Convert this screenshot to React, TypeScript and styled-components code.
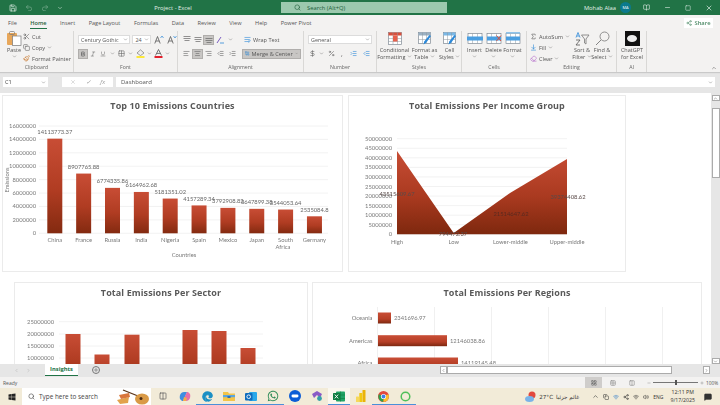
import React from 'react';
import styled, { createGlobalStyle } from 'styled-components';
import {
    Scissors, Copy, Paintbrush, Search, Undo2, Redo2, Save, Minus, X, Square, ChevronDown, ChevronUp,
    ChevronLeft, ChevronRight, Plus, Bold, Italic, Underline, AlignLeft, AlignCenter, AlignRight, Share2,
    Percent, DollarSign, Sigma, ArrowDownToLine, Eraser, IndentIncrease, IndentDecrease, WrapText, Combine,
    Grid2x2, BookOpen, Volume2, Wifi, MessageSquare, LayoutGrid, Columns2,
} from 'lucide-react';
import { FaWindows, FaWhatsapp, FaEdge } from 'react-icons/fa';

const Global = createGlobalStyle`
    html, body { margin: 0; padding: 0; background: #fff; overflow: hidden; }
    * { box-sizing: border-box; }
`;

const Page = styled.div`
    width: 720px;
    height: 405px;
    display: flex;
    flex-direction: column;
    overflow: hidden;
    font-family: 'Open Sans', 'Liberation Sans', sans-serif;
    font-size: 6px;
    color: #444;
    filter: blur(0.3px);
`;

const TitleBar = styled.div`
    height: 15px;
    flex: none;
    background: #217346;
    color: #e3f0e8;
    display: flex;
    align-items: center;
    padding: 0 7px 0 9px;
`;

const QuickAccess = styled.div`
    width: 100px;
    display: flex;
    align-items: center;
    gap: 8px;
`;

const DocTitle = styled.div`
    width: 128px;
    text-align: center;
    font-size: 5.8px;
    margin-right: 44px;
`;

const SearchBox = styled.div`
    width: 166px;
    height: 11px;
    background: #9cc9ae;
    color: #1d5c39;
    display: flex;
    align-items: center;
    gap: 6px;
    padding-left: 13px;
    font-size: 5.8px;
`;

const Account = styled.div`
    margin-left: auto;
    display: flex;
    align-items: center;
    gap: 4px;
    font-size: 5.8px;
`;

const Avatar = styled.div`
    width: 11px;
    height: 11px;
    border-radius: 50%;
    background: #0b7a8e;
    color: #fff;
    font-size: 4px;
    display: flex;
    align-items: center;
    justify-content: center;
`;

const WindowControls = styled.div`
    display: flex;
    align-items: center;
    gap: 14px;
    margin-left: 12px;
`;

const TabRow = styled.div`
    height: 15px;
    flex: none;
    background: #f3f2f1;
    display: flex;
    align-items: center;
    padding-left: 8px;
    gap: 13.5px;
`;

const Tab = styled.div<{ $active?: boolean }>`
    font-size: 5.6px;
    height: 12px;
    line-height: 12px;
    color: ${(props) => (props.$active ? '#1f5e3a' : '#555')};
    font-weight: ${(props) => (props.$active ? 600 : 400)};
    border-bottom: ${(props) => (props.$active ? '1px solid #217346' : 'none')};
`;

const ShareButton = styled.div`
    margin-left: auto;
    margin-right: 7px;
    width: 29px;
    height: 10px;
    background: #fff;
    color: #4d8a66;
    display: flex;
    align-items: center;
    justify-content: center;
    gap: 2px;
    font-size: 5.8px;
    font-weight: 600;
`;

const Ribbon = styled.div`
    height: 42px;
    flex: none;
    background: #f3f2f1;
    display: flex;
    position: relative;
    box-shadow: 0 1px 1px #c9c9c9;
    z-index: 1;
`;

const Group = styled.div<{ $w: number }>`
    width: ${(props) => props.$w}px;
    flex: none;
    display: flex;
    flex-direction: column;
    margin-top: 1px;
    border-right: 1px solid #d9d8d6;
`;

const GroupBody = styled.div<{ $pad?: number; $col?: boolean }>`
    flex: 1;
    display: flex;
    flex-direction: ${(props) => (props.$col ? 'column' : 'row')};
    padding-left: ${(props) => props.$pad ?? 3}px;
    min-height: 0;
`;

const GroupLabel = styled.div`
    height: 8px;
    line-height: 7px;
    text-align: center;
    font-size: 5.2px;
    color: #666;
`;

const Row = styled.div<{ $gap?: number; $h?: number }>`
    display: flex;
    align-items: center;
    gap: ${(props) => props.$gap ?? 0}px;
    height: ${(props) => props.$h ?? 14}px;
`;

const Stack = styled.div<{ $w?: number }>`
    display: flex;
    flex-direction: column;
    width: ${(props) => (props.$w ? `${props.$w}px` : 'auto')};
`;

const SmallAction = styled.div`
    height: 11px;
    display: flex;
    align-items: center;
    gap: 2px;
    font-size: 5.6px;
    color: #555;
    white-space: nowrap;
`;

const WrapAction = styled(SmallAction)`
    margin-left: 10px;
`;

const LargeAction = styled.div<{ $w: number }>`
    width: ${(props) => props.$w}px;
    flex: none;
    display: flex;
    flex-direction: column;
    align-items: center;
    font-size: 5.5px;
    line-height: 7.2px;
    text-align: center;
    color: #555;
    white-space: nowrap;
`;

const LargeIcon = styled.div`
    height: 15px;
    display: flex;
    align-items: center;
    justify-content: center;
    margin-bottom: 1px;
`;

const SelectBox = styled.div<{ $w: number }>`
    width: ${(props) => props.$w}px;
    height: 9px;
    background: #fff;
    border: 1px solid #dcdcdc;
    display: flex;
    align-items: center;
    justify-content: space-between;
    padding: 0 1px 0 2px;
    font-size: 5.4px;
    color: #555;
    white-space: nowrap;
`;

const IconCell = styled.div<{ $active?: boolean; $w?: number }>`
    width: ${(props) => props.$w ?? 11}px;
    height: 10px;
    flex: none;
    display: flex;
    align-items: center;
    justify-content: center;
    color: #666;
    font-size: 7px;
    background: ${(props) => (props.$active ? '#c8c6c4' : 'transparent')};
    border: ${(props) => (props.$active ? '1px solid #b0aeac' : 'none')};
`;

const MergeButton = styled.div`
    width: 59px;
    height: 10px;
    margin-left: 4px;
    display: flex;
    align-items: center;
    gap: 2px;
    padding: 0 2px;
    background: #c8c6c4;
    border: 1px solid #b0aeac;
    font-size: 5.6px;
    color: #555;
    white-space: nowrap;
`;

const GptTile = styled.div`
    width: 15px;
    height: 15px;
    background: #111;
    display: flex;
    align-items: center;
    justify-content: center;
`;

const GptMark = styled.div`
    width: 10px;
    height: 7px;
    border-radius: 50%;
    background: #eee;
`;

const CollapseArrow = styled.div`
    position: absolute;
    right: 3px;
    bottom: 1px;
    color: #555;
    display: flex;
`;

const FormulaStrip = styled.div`
    height: 21px;
    flex: none;
    background: #e6e6e6;
    display: flex;
    align-items: center;
    padding: 5px 0 6px 3px;
`;

const NameBox = styled.div`
    width: 45px;
    height: 10px;
    background: #fff;
    display: flex;
    align-items: center;
    justify-content: space-between;
    padding: 0 2px;
    font-size: 5.6px;
`;

const FxBox = styled.div`
    width: 51px;
    height: 10px;
    margin-left: 14px;
    background: #fff;
    display: flex;
    align-items: center;
    justify-content: space-around;
    padding: 0 3px;
    color: #999;
    font-size: 6px;
    font-style: italic;
`;

const FormulaInput = styled.div`
    flex: 1;
    height: 10px;
    margin: 0 5px 0 3px;
    background: #fff;
    display: flex;
    align-items: center;
    justify-content: space-between;
    padding: 0 2px 0 5px;
    font-size: 6px;
    color: #555;
`;

const SheetArea = styled.div`
    flex: 1;
    min-height: 0;
    display: flex;
    background: #fff;
`;

const Canvas = styled.div`
    flex: 1;
    min-width: 0;
    overflow: hidden;
    padding-top: 2px;
`;

const ChartRow = styled.div<{ $left: number; $gap: number; $top: number }>`
    display: flex;
    padding-left: ${(props) => props.$left}px;
    gap: ${(props) => props.$gap}px;
    margin-top: ${(props) => props.$top}px;
`;

const Card = styled.div<{ $w: number }>`
    width: ${(props) => props.$w}px;
    height: 177px;
    flex: none;
    background: #fff;
    border: 1px solid #ebebeb;
`;

const CardTitle = styled.div`
    height: 20px;
    line-height: 20px;
    text-align: center;
    font-size: 9px;
    font-weight: 700;
    letter-spacing: 0.1px;
    color: #595959;
`;

const Plot = styled.svg`
    display: block;
    font-family: 'Lato', 'Liberation Sans', sans-serif;
    font-size: 5.8px;
`;

const VScroll = styled.div`
    width: 9px;
    flex: none;
    background: #e6e6e6;
    display: flex;
    flex-direction: column;
    align-items: center;
    padding: 2px 0 0;
`;

const ScrollButton = styled.div`
    width: 8px;
    height: 6px;
    background: #fff;
    border: 1px solid #ababab;
    display: flex;
    align-items: center;
    justify-content: center;
    color: #555;
    flex: none;
`;

const ScrollDown = styled(ScrollButton)`
    margin-top: auto;
`;

const VThumb = styled.div`
    width: 8px;
    height: 70px;
    margin-top: 7px;
    background: #fff;
    border: 1px solid #ababab;
`;

const SheetTabs = styled.div`
    height: 13px;
    flex: none;
    background: #e6e6e6;
    display: flex;
    align-items: flex-start;
    color: #aaa;
`;

const TabNav = styled.div`
    width: 45px;
    height: 12px;
    display: flex;
    align-items: center;
    justify-content: flex-end;
    gap: 7px;
    padding-right: 14px;
`;

const SheetTab = styled.div`
    width: 33px;
    height: 12px;
    background: #fff;
    border-bottom: 1px solid #217346;
    color: #217346;
    font-size: 5.8px;
    font-weight: 700;
    text-align: center;
    line-height: 11px;
`;

const AddSheet = styled.div`
    width: 8px;
    height: 8px;
    margin: 2px 0 0 14px;
    border: 1px solid #777;
    border-radius: 50%;
    color: #555;
    display: flex;
    align-items: center;
    justify-content: center;
`;

const HScroll = styled.div`
    margin: 2px 0 0 340px;
    width: 270px;
    height: 8px;
    display: flex;
    align-items: stretch;
`;

const HThumb = styled.div`
    width: 225px;
    background: #fff;
    border: 1px solid #ababab;
`;

const HButton = styled(ScrollButton)`
    width: 7px;
    height: 8px;
`;

const HButtonEnd = styled(HButton)`
    margin-left: auto;
`;

const StatusBar = styled.div`
    height: 11px;
    flex: none;
    background: #f3f2f1;
    display: flex;
    align-items: center;
    padding-left: 3px;
    font-size: 5px;
    color: #555;
`;

const ViewButtons = styled.div`
    margin-left: auto;
    display: flex;
    align-items: center;
    height: 100%;
`;

const ViewButton = styled.div<{ $active?: boolean }>`
    width: 17px;
    height: 100%;
    margin-right: 2px;
    display: flex;
    align-items: center;
    justify-content: center;
    background: ${(props) => (props.$active ? '#cfcdcb' : 'transparent')};
`;

const ZoomSlider = styled.div`
    width: 45px;
    height: 1px;
    background: #777;
    margin: 0 2px;
    display: flex;
    align-items: center;
    justify-content: center;
`;

const ZoomThumb = styled.div`
    width: 2px;
    height: 5px;
    background: #555;
`;

const ZoomControl = styled.div`
    display: flex;
    align-items: center;
    margin: 0 2px 0 5px;
    color: #666;
`;

const Percentage = styled.div`
    width: 14px;
    font-size: 4.8px;
`;

const Taskbar = styled.div`
    height: 17px;
    flex: none;
    background: #f2ebd8;
    display: flex;
    align-items: stretch;
    color: #333;
`;

const StartButton = styled.div`
    width: 22px;
    display: flex;
    align-items: center;
    justify-content: center;
    padding-left: 1px;
    color: #222;
`;

const TaskSearch = styled.div`
    width: 129px;
    background: #fff;
    display: flex;
    align-items: center;
    padding-left: 6px;
    gap: 4px;
    font-size: 6.4px;
    color: #444;
`;

const SearchDoodle = styled.svg`
    margin-left: auto;
`;

const TaskIcons = styled.div`
    display: flex;
    padding-left: 1px;
`;

const TaskIcon = styled.div<{ $open?: boolean; $focus?: boolean }>`
    width: 22px;
    display: flex;
    align-items: center;
    justify-content: center;
    background: ${(props) => (props.$focus ? '#faf7ee' : 'transparent')};
    border-bottom: 1px solid ${(props) => (props.$open ? '#4a90d9' : 'transparent')};
`;

const Tray = styled.div`
    margin-left: auto;
    display: flex;
    align-items: center;
    padding-right: 8px;
    gap: 4px;
    font-size: 5px;
`;

const Weather = styled.div`
    display: flex;
    align-items: center;
    gap: 3px;
    margin-right: 9px;
    font-size: 5.6px;
    font-family: 'DejaVu Sans', 'Noto Sans', sans-serif;
`;

const Clock = styled.div`
    margin: 0 5px 0 3px;
    text-align: center;
    font-size: 5.2px;
    line-height: 7.5px;
`;

const bars = [
    { name: 'China', value: 14113773.37, label: '14113773.37' },
    { name: 'France', value: 8907765.88, label: '8907765.88' },
    { name: 'Russia', value: 6774335.86, label: '6774335.86' },
    { name: 'India', value: 6164962.68, label: '6164962.68' },
    { name: 'Nigeria', value: 5181351.02, label: '5181351.02' },
    { name: 'Spain', value: 4157289.34, label: '4157289.34' },
    { name: 'Mexico', value: 3792908.82, label: '3792908.82' },
    { name: 'Japan', value: 3647899.38, label: '3647899.38' },
    { name: 'South', value: 3544053.64, label: '3544053.64' },
    { name: 'Germany', value: 2535084.8, label: '2535084.8' },
];

const sectorBars = [
    { x: 73, top: 334 },
    { x: 102, top: 354.5 },
    { x: 132, top: 334.7 },
    { x: 190, top: 330 },
    { x: 219, top: 331 },
    { x: 248, top: 348 },
];

const regionBars = [
    { name: 'Oceania', y: 318, end: 391, label: '2341696.97' },
    { name: 'Americas', y: 340.7, end: 447, label: '12146038.86' },
    { name: 'Africa', y: 363, end: 458, label: '14119145.48' },
];

const TEXT = '#7a7a7a';
const GRID = '#efefef';

function Gradients() {
    return (
        <defs>
            <linearGradient id="barFill" x1="0" y1="0" x2="0" y2="1">
                <stop offset="0" stopColor="#c84d35" />
                <stop offset="0.55" stopColor="#b03c22" />
                <stop offset="1" stopColor="#832a10" />
            </linearGradient>
            <linearGradient id="hBarFill" x1="0" y1="0" x2="0" y2="1">
                <stop offset="0" stopColor="#c94e36" />
                <stop offset="0.6" stopColor="#b63f26" />
                <stop offset="1" stopColor="#7c2810" />
            </linearGradient>
        </defs>
    );
}

function CountriesPlot() {
    const zero = 233.3;
    const step = (233.3 - 126) / 16000000;
    const ticks = [0, 2, 4, 6, 8, 10, 12, 14, 16];
    return (
        <Plot width={339} height={155} viewBox="3 116 339 155">
            <Gradients />
            {ticks.map((t) => (
                <g key={t}>
                    <line x1="39" x2="328" y1={zero - t * 1000000 * step} y2={zero - t * 1000000 * step} stroke={GRID} strokeWidth="0.8" />
                    <text x="36" y={zero + 2 - t * 1000000 * step} textAnchor="end" fill={TEXT}>
                        {t === 0 ? '0' : `${t * 1000000}`}
                    </text>
                </g>
            ))}
            {bars.map((b, i) => {
                const cx = 54.8 + i * 28.85;
                const top = zero - b.value * step;
                return (
                    <g key={b.name}>
                        <rect x={cx - 7.5} y={top} width="15" height={zero - top} fill="url(#barFill)" />
                        <text x={cx} y={top - 4.5} textAnchor="middle" fill="#666">{b.label}</text>
                        <text x={cx} y="242" textAnchor="middle" fill={TEXT}>{b.name}</text>
                    </g>
                );
            })}
            <text x="283" y="249" textAnchor="middle" fill={TEXT}>Africa</text>
            <text x="184" y="257" textAnchor="middle" fill={TEXT}>Countries</text>
            <text transform="translate(8.5 180) rotate(-90)" textAnchor="middle" fill={TEXT}>Emissions</text>
        </Plot>
    );
}

function IncomePlot() {
    const zero = 234.3;
    const step = (234.3 - 138.7) / 50;
    const ticks = [0, 5, 10, 15, 20, 25, 30, 35, 40, 45, 50];
    return (
        <Plot width={276} height={155} viewBox="348 116 276 155">
            <defs>
                <linearGradient id="areaFill" gradientUnits="userSpaceOnUse" x1="0" y1="150" x2="0" y2="234">
                    <stop offset="0" stopColor="#c84d35" />
                    <stop offset="0.55" stopColor="#aa3a20" />
                    <stop offset="1" stopColor="#7e280e" />
                </linearGradient>
            </defs>
            {ticks.map((t) => (
                <g key={t}>
                    <line x1="396" x2="566" y1={zero - t * step} y2={zero - t * step} stroke={GRID} strokeWidth="0.8" />
                    <text x="391" y={zero + 2 - t * step} textAnchor="end" fill={TEXT}>{t === 0 ? '0' : `${t * 1000000}`}</text>
                </g>
            ))}
            <polygon points="396,151 452.7,233 509,193 566,159 566,234.3 396,234.3" fill="url(#areaFill)" />
            <text x="396" y="195.5" textAnchor="middle" fill="#5a4a48">43515609.67</text>
            <text x="452" y="236" textAnchor="middle" fill="#5a4a48">794472.37</text>
            <text x="510" y="216" textAnchor="middle" fill="#5a2a20">21514647.62</text>
            <text x="567" y="199" textAnchor="middle" fill="#5a4a48">39374408.62</text>
            <text x="396" y="244" textAnchor="middle" fill={TEXT}>High</text>
            <text x="452.7" y="244" textAnchor="middle" fill={TEXT}>Low</text>
            <text x="509.5" y="244" textAnchor="middle" fill={TEXT}>Lower-middle</text>
            <text x="566" y="244" textAnchor="middle" fill={TEXT}>Upper-middle</text>
        </Plot>
    );
}

function SectorPlot() {
    const ticks = [
        { y: 321.7, label: '25000000' },
        { y: 334, label: '20000000' },
        { y: 346, label: '15000000' },
        { y: 358, label: '10000000' },
    ];
    return (
        <Plot width={292} height={155} viewBox="15 303 292 155">
            <Gradients />
            {ticks.map((t) => (
                <g key={t.label}>
                    <line x1="59" x2="263" y1={t.y} y2={t.y} stroke={GRID} strokeWidth="0.8" />
                    <text x="54" y={t.y + 2} textAnchor="end" fill={TEXT}>{t.label}</text>
                </g>
            ))}
            {sectorBars.map((b) => (
                <rect key={b.x} x={b.x - 7.5} y={b.top} width="15" height={384 - b.top} fill="url(#barFill)" />
            ))}
        </Plot>
    );
}

function RegionsPlot() {
    return (
        <Plot width={388} height={155} viewBox="313 303 388 155">
            <Gradients />
            {[377.5, 434.5, 491.5, 548.5, 605.5, 662.5].map((x) => (
                <line key={x} x1={x} x2={x} y1="307" y2="400" stroke="#ececec" strokeWidth="0.8" />
            ))}
            {regionBars.map((b) => (
                <g key={b.name}>
                    <rect x="378" y={b.y - 5.5} width={b.end - 378} height="11" fill="url(#hBarFill)" />
                    <text x="372.5" y={b.y + 2} textAnchor="end" fill={TEXT}>{b.name}</text>
                    <text x={b.end + 3} y={b.y + 2} fill={TEXT}>{b.label}</text>
                </g>
            ))}
        </Plot>
    );
}

function TableIcon({ accent, overlay }: { accent: string; overlay?: string }) {
    return (
        <svg width="14" height="13" viewBox="0 0 14 13">
            <rect x="0.5" y="0.5" width="13" height="12" fill="#fff" stroke="#7f8a94" strokeWidth="0.7" />
            <rect x="0.5" y="0.5" width="13" height="3" fill={accent} />
            <path d="M5 0.5V12.5M9.5 0.5V12.5M0.5 6.5H13.5M0.5 9.5H13.5" stroke="#8d969e" strokeWidth="0.5" />
            {overlay && <rect x="5" y="3.5" width="4.5" height="6" fill={overlay} />}
        </svg>
    );
}

function BrushTable({ fill }: { fill: string }) {
    return (
        <svg width="14" height="13" viewBox="0 0 14 13">
            <rect x="0.5" y="0.5" width="12" height="11" fill="#fff" stroke="#7f8a94" strokeWidth="0.7" />
            <rect x="0.5" y="0.5" width="12" height="3" fill={fill} />
            <path d="M4.5 0.5V11.5M8.5 0.5V11.5M0.5 7.5H12.5" stroke="#8d969e" strokeWidth="0.5" />
            <path d="M13 4 8 11 5.5 12.5 6.2 9.6 11.4 3Z" fill="#2b88d8" />
        </svg>
    );
}

function CellsIcon({ mark }: { mark: 'insert' | 'delete' | 'format' }) {
    return (
        <svg width="16" height="13" viewBox="0 0 16 13">
            <rect x="1" y="1.5" width="14" height="10" fill="#fff" stroke="#7f8a94" strokeWidth="0.7" />
            <path d="M5.5 1.5V11.5M10.5 1.5V11.5" stroke="#8d969e" strokeWidth="0.5" />
            <rect x={mark === 'insert' ? 0 : 1} y="4.5" width={mark === 'insert' ? 16 : 14} height="4" fill="#4a9ee0" />
            {mark === 'delete' && <path d="M10.5 3.5 15 9M15 3.5 10.5 9" stroke="#d8503c" strokeWidth="1" />}
            {mark === 'format' && <rect x="1" y="0" width="14" height="1.6" fill="#8fc3ea" />}
        </svg>
    );
}

function SortIcon() {
    return (
        <svg width="15" height="14" viewBox="0 0 15 14">
            <path d="M1 5.5 3 0.5 5 5.5M1.8 4H4.2" fill="none" stroke="#2b88d8" strokeWidth="0.8" />
            <path d="M1 8H5L1 13H5" fill="none" stroke="#555" strokeWidth="0.8" />
            <path d="M6.5 3H14L11 7V12L9.5 11V7Z" fill="none" stroke="#777" strokeWidth="0.8" />
        </svg>
    );
}

function FindIcon() {
    return (
        <svg width="15" height="15" viewBox="0 0 15 15">
            <circle cx="9.5" cy="5.5" r="4.5" fill="none" stroke="#777" strokeWidth="0.8" />
            <path d="M6 9 1 14" stroke="#777" strokeWidth="0.9" />
        </svg>
    );
}

function PasteIcon() {
    return (
        <svg width="16" height="15" viewBox="0 0 16 15">
            <rect x="1" y="2" width="10" height="12" rx="1" fill="#e8a75a" />
            <rect x="3.5" y="0.5" width="5" height="3" rx="1" fill="none" stroke="#777" strokeWidth="0.7" />
            <rect x="6.5" y="5" width="8.5" height="9.5" fill="#fff" stroke="#777" strokeWidth="0.7" />
        </svg>
    );
}

function ValignIcon({ offset }: { offset: number }) {
    return (
        <svg width="8" height="7" viewBox="0 0 8 7">
            <path d={`M0.5 ${offset + 0.5}H7.5M0.5 ${offset + 2.5}H7.5M1.5 ${offset + 4.5}H6.5`} stroke="#666" strokeWidth="0.7" />
        </svg>
    );
}

function OrientationIcon() {
    return (
        <svg width="9" height="8" viewBox="0 0 9 8">
            <path d="M1 7 5 1" stroke="#7a5cc0" strokeWidth="1" />
            <path d="M4 7H8" stroke="#2b88d8" strokeWidth="0.8" />
        </svg>
    );
}

function FillIcon({ bar, letter }: { bar: string; letter?: boolean }) {
    return (
        <svg width="9" height="9" viewBox="0 0 9 9">
            {letter ? (
                <path d="M1.5 6.5 4.5 0.5 7.5 6.5M2.8 4.4H6.2" fill="none" stroke="#555" strokeWidth="0.8" />
            ) : (
                <path d="M4.5 0.8 8 4 4.5 6.6 1 4Z" fill="#eee" stroke="#666" strokeWidth="0.6" />
            )}
            <rect x="0.5" y="7" width="8" height="2" fill={bar} />
        </svg>
    );
}

function GrowFont({ up }: { up: boolean }) {
    return (
        <svg width="10" height="9" viewBox="0 0 10 9">
            <path d="M0.8 8.5 3.5 1.5 6.2 8.5M1.8 6H5.2" fill="none" stroke="#555" strokeWidth="0.8" />
            <path d={up ? 'M6.5 3 8 1 9.5 3' : 'M6.5 1 8 3 9.5 1'} fill="none" stroke="#2b88d8" strokeWidth="0.7" />
        </svg>
    );
}

function Caret() {
    return <ChevronDown size={5} strokeWidth={2} color="#666" />;
}

function ExcelIcon() {
    return (
        <svg width="12" height="11" viewBox="0 0 12 11">
            <rect x="3" y="0.5" width="9" height="10" rx="0.8" fill="#21a366" />
            <path d="M7.5 0.5V10.5M3 4H12M3 7.5H12" stroke="#107c41" strokeWidth="0.6" />
            <rect x="0" y="2" width="7" height="7" rx="0.6" fill="#107c41" />
            <path d="M1.8 3.6 5.2 7.4M5.2 3.6 1.8 7.4" stroke="#fff" strokeWidth="0.9" />
        </svg>
    );
}

function ChromeIcon() {
    return (
        <svg width="11" height="11" viewBox="0 0 12 12">
            <circle cx="6" cy="6" r="6" fill="#e2483d" />
            <path d="M6 6 1 3.5 A6 6 0 0 0 6 12Z" fill="#2ba24c" />
            <path d="M6 6 11.3 3.5 A6 6 0 0 1 6 12Z" fill="#fbc02d" />
            <circle cx="6" cy="6" r="2.8" fill="#fff" />
            <circle cx="6" cy="6" r="2.1" fill="#3f7fe8" />
        </svg>
    );
}

function CopilotIcon() {
    return (
        <svg width="12" height="11" viewBox="0 0 12 11">
            <path d="M1 8C0 4 2 1 5 1H8L6 6 4 10H3Z" fill="#3f8fe0" />
            <path d="M11 3C12 7 10 10 7 10H4L6 5 8 1H9Z" fill="#e870a8" />
            <path d="M4 10 7 10 8 7 5 6Z" fill="#f3b04a" />
        </svg>
    );
}

function FolderIcon() {
    return (
        <svg width="12" height="10" viewBox="0 0 12 10">
            <path d="M0 1H5L6 2.5H12V10H0Z" fill="#f4c447" />
            <rect x="0" y="4" width="12" height="2.2" fill="#5aa6e0" />
            <rect x="4.5" y="5" width="3" height="2" fill="#2d6fb5" />
        </svg>
    );
}

function OutlookIcon() {
    return (
        <svg width="12" height="11" viewBox="0 0 12 11">
            <rect x="4" y="1" width="8" height="9" rx="1" fill="#28a8ea" />
            <rect x="0" y="2" width="7.5" height="7.5" rx="1" fill="#0f6cbd" />
            <circle cx="3.7" cy="5.7" r="1.8" fill="none" stroke="#fff" strokeWidth="0.9" />
        </svg>
    );
}

function ZoomIcon() {
    return (
        <svg width="12" height="12" viewBox="0 0 12 12">
            <circle cx="6" cy="6" r="6" fill="#0b5cd6" />
            <rect x="2.5" y="4.5" width="7" height="3" rx="1.4" fill="#fff" />
        </svg>
    );
}

function StudioIcon() {
    return (
        <svg width="12" height="12" viewBox="0 0 12 12">
            <path d="M1 4 6 1 11 4 9 8 6 5 3 8Z" fill="#8a5cc6" />
            <circle cx="8.5" cy="8.5" r="2.4" fill="#35a0a8" />
        </svg>
    );
}

function PowerBiIcon() {
    return (
        <svg width="10" height="12" viewBox="0 0 10 12">
            <rect x="6.5" y="0" width="3" height="12" rx="0.6" fill="#eab308" />
            <rect x="3.3" y="3" width="3" height="9" rx="0.6" fill="#f2c811" />
            <rect x="0" y="6.5" width="3" height="5.5" rx="0.6" fill="#f6d85a" />
        </svg>
    );
}

function Doodle() {
    return (
        <SearchDoodle width="34" height="16" viewBox="0 0 34 16">
            <path d="M0 11 12 8 11 14 3 15Z" fill="#e2a24c" />
            <path d="M2 6 12 4 13 8 4 10Z" fill="#d9763c" />
            <path d="M6 1 21 7" stroke="#5a3418" strokeWidth="1.2" />
            <ellipse cx="25" cy="10" rx="7" ry="5.5" fill="#d99a46" />
            <circle cx="24" cy="9.5" r="1.5" fill="#4a2a12" />
        </SearchDoodle>
    );
}

export default function App() {
    return (
        <Page>
            <Global />
            <TitleBar>
                <QuickAccess>
                    <Save size={8} />
                    <Undo2 size={8} opacity={0.45} />
                    <Redo2 size={8} opacity={0.45} />
                    <ChevronDown size={6} />
                </QuickAccess>
                <DocTitle>Project  -  Excel</DocTitle>
                <SearchBox>
                    <Search size={7} />
                    Search (Alt+Q)
                </SearchBox>
                <Account>
                    Mohab Alaa
                    <Avatar>MA</Avatar>
                </Account>
                <WindowControls>
                    <BookOpen size={7} />
                    <Minus size={7} />
                    <Square size={6} />
                    <X size={8} />
                </WindowControls>
            </TitleBar>

            <TabRow>
                <Tab>File</Tab>
                <Tab $active>Home</Tab>
                <Tab>Insert</Tab>
                <Tab>Page Layout</Tab>
                <Tab>Formulas</Tab>
                <Tab>Data</Tab>
                <Tab>Review</Tab>
                <Tab>View</Tab>
                <Tab>Help</Tab>
                <Tab>Power Pivot</Tab>
                <ShareButton>
                    <Share2 size={6} />
                    Share
                </ShareButton>
            </TabRow>

            <Ribbon>
                <Group $w={74}>
                    <GroupBody $pad={5}>
                        <LargeAction $w={18}>
                            <LargeIcon><PasteIcon /></LargeIcon>
                            Paste
                            <Caret />
                        </LargeAction>
                        <Stack>
                            <SmallAction><Scissors size={7} color="#666" /> Cut</SmallAction>
                            <SmallAction><Copy size={7} color="#666" /> Copy <Caret /></SmallAction>
                            <SmallAction><Paintbrush size={7} color="#c8762a" /> Format Painter</SmallAction>
                        </Stack>
                    </GroupBody>
                    <GroupLabel>Clipboard</GroupLabel>
                </Group>

                <Group $w={104}>
                    <GroupBody $pad={4} $col>
                        <Row $gap={2} $h={17}>
                            <SelectBox $w={54}>Century Gothic <Caret /></SelectBox>
                            <SelectBox $w={19}>24 <Caret /></SelectBox>
                            <IconCell $w={11}><GrowFont up /></IconCell>
                            <IconCell $w={11}><GrowFont up={false} /></IconCell>
                        </Row>
                        <Row $h={11}>
                            <IconCell $active $w={10}><Bold size={6} strokeWidth={3} /></IconCell>
                            <IconCell $w={10}><Italic size={6} /></IconCell>
                            <IconCell $w={10}><Underline size={6} /></IconCell>
                            <IconCell $w={8}><Caret /></IconCell>
                            <IconCell $w={10}><Grid2x2 size={7} /></IconCell>
                            <IconCell $w={9}><Caret /></IconCell>
                            <IconCell $w={11}><FillIcon bar="#fce83a" /></IconCell>
                            <IconCell $w={7}><Caret /></IconCell>
                            <IconCell $w={11}><FillIcon bar="#e3202c" letter /></IconCell>
                            <IconCell $w={7}><Caret /></IconCell>
                        </Row>
                    </GroupBody>
                    <GroupLabel>Font</GroupLabel>
                </Group>

                <Group $w={126}>
                    <GroupBody $pad={3} $col>
                        <Row $h={17}>
                            <IconCell><ValignIcon offset={0} /></IconCell>
                            <IconCell><ValignIcon offset={1} /></IconCell>
                            <IconCell $active><ValignIcon offset={2} /></IconCell>
                            <IconCell $w={13}><OrientationIcon /></IconCell>
                            <IconCell $w={7}><Caret /></IconCell>
                            <WrapAction>
                                <WrapText size={7} color="#2b88d8" /> Wrap Text
                            </WrapAction>
                        </Row>
                        <Row $h={11}>
                            <IconCell><AlignLeft size={7} /></IconCell>
                            <IconCell $active><AlignCenter size={7} /></IconCell>
                            <IconCell><AlignRight size={7} /></IconCell>
                            <IconCell $w={12}><IndentDecrease size={7} /></IconCell>
                            <IconCell $w={12}><IndentIncrease size={7} /></IconCell>
                            <MergeButton>
                                <Combine size={7} color="#2b88d8" /> Merge &amp; Center <Caret />
                            </MergeButton>
                        </Row>
                    </GroupBody>
                    <GroupLabel>Alignment</GroupLabel>
                </Group>

                <Group $w={73}>
                    <GroupBody $pad={4} $col>
                        <Row $h={17}>
                            <SelectBox $w={64}>General <Caret /></SelectBox>
                        </Row>
                        <Row $h={11}>
                            <IconCell $w={9}><DollarSign size={7} /></IconCell>
                            <IconCell $w={9}><Caret /></IconCell>
                            <IconCell $w={11}><Percent size={7} /></IconCell>
                            <IconCell $w={10}>,</IconCell>
                            <IconCell $w={13}><IndentIncrease size={7} color="#2b88d8" /></IconCell>
                            <IconCell $w={13}><IndentDecrease size={7} color="#2b88d8" /></IconCell>
                        </Row>
                    </GroupBody>
                    <GroupLabel>Number</GroupLabel>
                </Group>

                <Group $w={85}>
                    <GroupBody $pad={2}>
                        <LargeAction $w={31}>
                            <LargeIcon><TableIcon accent="#d8503c" overlay="#e5604c" /></LargeIcon>
                            Conditional
                            <span>Formatting <Caret /></span>
                        </LargeAction>
                        <LargeAction $w={29}>
                            <LargeIcon><BrushTable fill="#9ab0c2" /></LargeIcon>
                            Format as
                            <span>Table <Caret /></span>
                        </LargeAction>
                        <LargeAction $w={21}>
                            <LargeIcon><BrushTable fill="#7ab8e6" /></LargeIcon>
                            Cell
                            <span>Styles <Caret /></span>
                        </LargeAction>
                    </GroupBody>
                    <GroupLabel>Styles</GroupLabel>
                </Group>

                <Group $w={65}>
                    <GroupBody $pad={3}>
                        <LargeAction $w={19}>
                            <LargeIcon><CellsIcon mark="insert" /></LargeIcon>
                            Insert
                            <Caret />
                        </LargeAction>
                        <LargeAction $w={19}>
                            <LargeIcon><CellsIcon mark="delete" /></LargeIcon>
                            Delete
                            <Caret />
                        </LargeAction>
                        <LargeAction $w={19}>
                            <LargeIcon><CellsIcon mark="format" /></LargeIcon>
                            Format
                            <Caret />
                        </LargeAction>
                    </GroupBody>
                    <GroupLabel>Cells</GroupLabel>
                </Group>

                <Group $w={90}>
                    <GroupBody $pad={3}>
                        <Stack $w={42}>
                            <SmallAction><Sigma size={7} /> AutoSum <Caret /></SmallAction>
                            <SmallAction><ArrowDownToLine size={7} color="#2b88d8" /> Fill <Caret /></SmallAction>
                            <SmallAction><Eraser size={7} color="#b060c8" /> Clear <Caret /></SmallAction>
                        </Stack>
                        <LargeAction $w={20}>
                            <LargeIcon><SortIcon /></LargeIcon>
                            Sort &amp;
                            <span>Filter <Caret /></span>
                        </LargeAction>
                        <LargeAction $w={20}>
                            <LargeIcon><FindIcon /></LargeIcon>
                            Find &amp;
                            <span>Select <Caret /></span>
                        </LargeAction>
                    </GroupBody>
                    <GroupLabel>Editing</GroupLabel>
                </Group>

                <Group $w={30}>
                    <GroupBody $pad={0}>
                        <LargeAction $w={30}>
                            <LargeIcon><GptTile><GptMark /></GptTile></LargeIcon>
                            ChatGPT
                            <span>for Excel</span>
                        </LargeAction>
                    </GroupBody>
                    <GroupLabel>AI</GroupLabel>
                </Group>
                <CollapseArrow><ChevronUp size={6} /></CollapseArrow>
            </Ribbon>

            <FormulaStrip>
                <NameBox>C1 <Caret /></NameBox>
                <FxBox>
                    <X size={6} color="#bbb" />
                    <span>✓</span>
                    <span>fx</span>
                </FxBox>
                <FormulaInput>Dashboard <Caret /></FormulaInput>
            </FormulaStrip>

            <SheetArea>
                <Canvas>
                    <ChartRow $left={2} $gap={5} $top={0}>
                        <Card $w={341}>
                            <CardTitle>Top 10 Emissions Countries</CardTitle>
                            <CountriesPlot />
                        </Card>
                        <Card $w={278}>
                            <CardTitle>Total Emissions Per Income Group</CardTitle>
                            <IncomePlot />
                        </Card>
                    </ChartRow>
                    <ChartRow $left={14} $gap={4} $top={10}>
                        <Card $w={294}>
                            <CardTitle>Total Emissions Per Sector</CardTitle>
                            <SectorPlot />
                        </Card>
                        <Card $w={390}>
                            <CardTitle>Total Emissions Per Regions</CardTitle>
                            <RegionsPlot />
                        </Card>
                    </ChartRow>
                </Canvas>
                <VScroll>
                    <ScrollButton><ChevronUp size={5} /></ScrollButton>
                    <VThumb />
                    <ScrollDown><ChevronDown size={5} /></ScrollDown>
                </VScroll>
            </SheetArea>

            <SheetTabs>
                <TabNav>
                    <ChevronLeft size={5} />
                    <ChevronRight size={5} />
                </TabNav>
                <SheetTab>Insights</SheetTab>
                <AddSheet><Plus size={6} /></AddSheet>
                <HScroll>
                    <HButton><ChevronLeft size={5} /></HButton>
                    <HThumb />
                    <HButtonEnd><ChevronRight size={5} /></HButtonEnd>
                </HScroll>
            </SheetTabs>

            <StatusBar>
                Ready
                <ViewButtons>
                    <ViewButton $active><LayoutGrid size={6} color="#555" /></ViewButton>
                    <ViewButton><Grid2x2 size={6} color="#777" /></ViewButton>
                    <ViewButton><Columns2 size={6} color="#777" /></ViewButton>
                    <ZoomControl>
                        <Minus size={4} />
                        <ZoomSlider><ZoomThumb /></ZoomSlider>
                        <Plus size={4} />
                    </ZoomControl>
                    <Percentage>100%</Percentage>
                </ViewButtons>
            </StatusBar>

            <Taskbar>
                <StartButton><FaWindows size={8} /></StartButton>
                <TaskSearch>
                    <Search size={7} />
                    Type here to search
                    <Doodle />
                </TaskSearch>
                <TaskIcons>
                    <TaskIcon><Columns2 size={8} color="#555" /></TaskIcon>
                    <TaskIcon><CopilotIcon /></TaskIcon>
                    <TaskIcon $open><FaEdge size={11} color="#1a8fc4" /></TaskIcon>
                    <TaskIcon $open><FolderIcon /></TaskIcon>
                    <TaskIcon $open><OutlookIcon /></TaskIcon>
                    <TaskIcon $open><FaWhatsapp size={12} color="#2e8b57" /></TaskIcon>
                    <TaskIcon><ZoomIcon /></TaskIcon>
                    <TaskIcon><StudioIcon /></TaskIcon>
                    <TaskIcon $open $focus><ExcelIcon /></TaskIcon>
                    <TaskIcon><PowerBiIcon /></TaskIcon>
                    <TaskIcon $open><ChromeIcon /></TaskIcon>
                    <TaskIcon $open>
                        <svg width="11" height="11" viewBox="0 0 11 11">
                            <circle cx="5.5" cy="5.5" r="4.3" fill="none" stroke="#4fbf5a" strokeWidth="1.5" />
                        </svg>
                    </TaskIcon>
                </TaskIcons>
                <Tray>
                    <Weather>
                        <svg width="11" height="12" viewBox="0 0 11 12">
                            <circle cx="7" cy="4" r="3.5" fill="#e2483d" />
                            <ellipse cx="4.5" cy="8" rx="4.5" ry="3" fill="#7ab3e8" />
                        </svg>
                        27°C
                        <span dir="rtl">غائم جزئيا</span>
                    </Weather>
                    <ChevronUp size={7} />
                    <Copy size={6} />
                    <Wifi size={6} color="#2b78c8" />
                    <Share2 size={6} />
                    <Wifi size={6} />
                    <Volume2 size={6} />
                    <span>ENG</span>
                    <Clock>12:11 PM<br />9/17/2025</Clock>
                    <MessageSquare size={8} fill="#333" />
                </Tray>
            </Taskbar>
        </Page>
    );
}
